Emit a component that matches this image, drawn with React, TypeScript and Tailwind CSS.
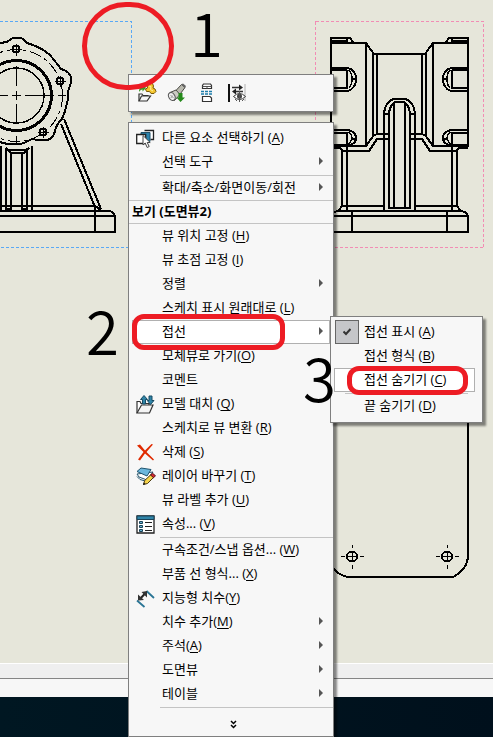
import type { ReactNode } from "react";
import { clsx } from "clsx";

type Item = {
  label: string;
  hotkey?: string;
  icon?: ReactNode;
  submenu?: boolean;
  active?: boolean;
};

const SelectOtherIcon = () => (
  <svg width="19" height="19" viewBox="0 0 19 19" fill="none">
    <path d="M8.500 1.500h9v9h-3" fill="#fff" stroke="#222" strokeWidth="1.300" />
    <path d="M5 3.500h9v9H5z" fill="#2b84ad" stroke="#1d4f68" />
    <path d="M.7 5.500h9v9h-9z" fill="#fff" stroke="#222" strokeWidth="1.300" />
    <path d="M7 6.500v9.500l2.200-2 2 4.500 2-1-2-4h3z" fill="#fff" stroke="#444" />
  </svg>
);

const ReplaceModelIcon = () => (
  <svg width="19" height="19" viewBox="0 0 19 19" fill="none">
    <path d="M1 18V6.500h3l1 2h8V11" fill="#fff" stroke="#333" strokeWidth="1.200" />
    <path d="M1 18l4.500-8h11.500l-3.500 8z" fill="#f4f4f4" stroke="#333" strokeWidth="1.200" />
    <path d="M8 .500l3.500 4H9.500V9h-3V4.500h-2z" fill="#2f84a8" stroke="#174b63" />
    <path d="M14.500 9.500l-3.200-4h1.700V1h3v4.500h2z" fill="#2f84a8" stroke="#174b63" />
  </svg>
);

const DeleteIcon = () => (
  <svg width="19" height="19" viewBox="0 0 19 19" fill="#e02a00">
    <path d="M1 2.500L4 1.500l5 6L15.500 1l1.500.500-6.500 7.500L18 16.500l-1 1-8-7L4 17.500l-2-1 5.500-7.500z" />
  </svg>
);

const LayerIcon = () => (
  <svg width="20" height="19" viewBox="0 0 20 19" fill="none" className="shrink-0">
    <path d="M1 7l2 3 8 3 6-8z" fill="#fff" stroke="#27566d" />
    <path d="M1 9.500l3 3 7 2 5-6" stroke="#27566d" />
    <path d="M1 4.500L5 1l10 1.500L11 9z" fill="#6bb7dd" stroke="#20546e" />
    <path d="M7.500 17.500l1.200-4L15 7.500l3 2.500-6.500 6.500z" fill="#f6d44a" stroke="#4b3a12" />
    <path d="M14.500 8l2-1.800 3 2.600-2 1.900z" fill="#d8262c" stroke="#54151a" />
    <path d="M7 18l.8-2.500 1.700 1.500z" fill="#111" />
  </svg>
);

const PropertiesIcon = () => (
  <svg width="19" height="19" viewBox="0 0 19 19" fill="none">
    <path d="M1 1h17v17H1z" fill="#fff" stroke="#222" strokeWidth="1.300" />
    <path d="M1 1h17v3.500H1z" fill="#2f84a8" stroke="#1a4358" />
    <path d="M3.500 6.500h3v2h-3zM3.500 10.500h3v2h-3zM3.500 14.500h3v2h-3z" fill="#69b2d2" stroke="#1a4358" />
    <path d="M9 7.500h7M9 11.500h7M9 15.500h7" stroke="#222" />
  </svg>
);

const SmartDimensionIcon = () => (
  <svg width="19" height="19" viewBox="0 0 19 19" fill="none">
    <path d="M1 11.500L8.500 18M10.500 2L18 9" stroke="#2a7595" strokeWidth="1.800" />
    <path d="M3.500 10.500L10 3.500" stroke="#222" strokeWidth="2" />
    <path d="M2 11.500V5.500l6 5.500zM11 2v6.500L5.500 3z" fill="#333" />
  </svg>
);

const OpenPartIcon = () => (
  <svg width="20" height="20" viewBox="0 0 20 20" fill="none">
    <path d="M10 2l2-1.500h3.500l1 2.500-.5 2 2 1 1 2.500-2 2h-3l-1.500-2h-3L8.500 6l2-1z" fill="#f4c52c" stroke="#795a08" />
    <path d="M12 3l2 .500-.500 3 2.500 1.500" stroke="#fff1a0" />
    <path d="M2 9c0-4 1.500-5.500 3.500-5.500V1l3.500 4-3.500 3.500V6.500C4 6.500 3 7.500 2 9z" fill="#3d9b24" />
    <path d="M2 18v-7h3l1 1.500h5V14" fill="#fff" stroke="#333" strokeWidth="1.200" />
    <path d="M2 18l2.500-5h9l-3.500 5z" fill="#f6f6f6" stroke="#333" strokeWidth="1.200" />
  </svg>
);

const FlashlightIcon = () => (
  <svg width="20" height="20" viewBox="0 0 20 20" fill="none">
    <path d="M8.500 8L14.500 1.500l3.500 3-6 8z" fill="#b9b9ae" stroke="#494943" />
    <path d="M14 1.500l2-1 3 2.500-1 2z" fill="#666" />
    <path d="M3 9.500l6-2.500 4 4.500-5.500 6z" fill="#cbcbc3" stroke="#4b4b46" />
    <ellipse cx="4.800" cy="13.500" rx="3" ry="4.200" transform="rotate(-28 4.800 13.500)" fill="#eee" stroke="#555" />
    <path d="M3.500 12l3 3M3.800 15l2-2.500" stroke="#999" />
    <path d="M11.500 10h4v4.500H18L13.500 19 9.500 14.500h2z" fill="#25891b" />
  </svg>
);

const BreakViewIcon = () => (
  <svg width="12" height="20" viewBox="0 0 12 20" fill="none">
    <path d="M1.500 5.500V2.500l1-1.500h7l1 1.500v3z" fill="#fff" stroke="#333" strokeWidth="1.200" />
    <path d="M1.500 3.500h9M6 3.500v2" stroke="#555" />
    <path d="M0 8.500h12M0 11h12" stroke="#1d7daa" strokeWidth="1.500" strokeDasharray="3 1" />
    <path d="M1.500 18.500v-5h7.500l1.500 1.500v3.500z" fill="#fff" stroke="#333" strokeWidth="1.200" />
  </svg>
);

const FlipDimensionIcon = () => (
  <svg width="20" height="20" viewBox="0 0 20 20" fill="none">
    <path d="M2 1v18" stroke="#111" strokeWidth="2" />
    <path d="M18 1v17" stroke="#c9c9c9" strokeWidth="1.500" />
    <path d="M5 4.500h9M8 8.500h8" stroke="#333" strokeWidth="1.500" />
    <path d="M12 1.500l4 3-4 3zM9 5.500l-4 3 4 3z" fill="#222" />
    <path d="M6.500 13.500q6-6 12 0-6 6-12 0z" fill="#fff" stroke="#333" />
    <circle cx="12.500" cy="13.300" r="2.500" fill="#444" />
    <path d="M12.500 8v11M8 16l2 2M17 16l-2 2" stroke="#555" />
  </svg>
);

const viewCommands: Item[] = [
  { label: "뷰 위치 고정 ", hotkey: "H" },
  { label: "뷰 초점 고정 ", hotkey: "I" },
  { label: "정렬", submenu: true },
  { label: "스케치 표시 원래대로 ", hotkey: "L" },
  { label: "접선", submenu: true, active: true },
  { label: "모체뷰로 가기", hotkey: "O" },
  { label: "코멘트" },
  { label: "모델 대치 ", hotkey: "Q", icon: <ReplaceModelIcon /> },
  { label: "스케치로 뷰 변환 ", hotkey: "R" },
  { label: "삭제 ", hotkey: "S", icon: <DeleteIcon /> },
  { label: "레이어 바꾸기 ", hotkey: "T", icon: <LayerIcon /> },
  { label: "뷰 라벨 추가 ", hotkey: "U" },
  { label: "속성... ", hotkey: "V", icon: <PropertiesIcon /> },
];

const moreCommands: Item[] = [
  { label: "구속조건/스냅 옵션... ", hotkey: "W" },
  { label: "부품 선 형식... ", hotkey: "X" },
  { label: "지능형 치수", hotkey: "Y", icon: <SmartDimensionIcon /> },
  { label: "치수 추가", hotkey: "M", submenu: true },
  { label: "주석", hotkey: "A", submenu: true },
  { label: "도면뷰", submenu: true },
  { label: "테이블", submenu: true },
];

const tools = [
  { name: "파트 열기", icon: <OpenPartIcon /> },
  { name: "확대 선택", icon: <FlashlightIcon /> },
  { name: "파단도", icon: <BreakViewIcon /> },
  { name: "치수 숨기기", icon: <FlipDimensionIcon /> },
];

const Label = ({ label, hotkey }: { label: string; hotkey?: string }) => (
  <span className="whitespace-pre">
    {label}
    {hotkey && (
      <>
        (<u className="underline-offset-2">{hotkey}</u>)
      </>
    )}
  </span>
);

const MenuItem = ({ item }: { item: Item }) => (
  <button
    type="button"
    role="menuitem"
    className={clsx(
      "mx-[3px] flex h-6 items-center border text-left",
      item.active ? "border-[#b0b0b0] bg-white" : "border-transparent"
    )}
  >
    <span className="flex w-[29px] shrink-0 pl-[3px]">{item.icon}</span>
    <span className="flex-1 pb-0.5">
      <Label label={item.label} hotkey={item.hotkey} />
    </span>
    {item.submenu && (
      <svg width="4" height="8" viewBox="0 0 4 8" className="mr-1.5 mb-0.5">
        <path d="M0 0l4 4-4 4z" fill="#555" />
      </svg>
    )}
  </button>
);

const Separator = () => <hr className="mt-px ml-[31px] border-[#c4c4c4]" />;

const ContextMenu = () => (
  <div
    role="menu"
    className="absolute top-[122px] left-32 flex w-[206px] flex-col border border-[#7f7f7f] bg-[#f7f7f7] pt-[3px] shadow-[3px_3px_2px_rgba(0,0,0,0.45)]"
  >
    <MenuItem item={{ label: "다른 요소 선택하기 ", hotkey: "A", icon: <SelectOtherIcon /> }} />
    <MenuItem item={{ label: "선택 도구", submenu: true }} />
    <Separator />
    <MenuItem item={{ label: "확대/축소/화면이동/회전", submenu: true }} />
    <h2 className="h-6 border-y border-[#c4c4c4] pl-[3px] text-[13px] leading-5 font-bold">보기 (도면뷰2)</h2>
    {viewCommands.map((item) => (
      <MenuItem key={item.label} item={item} />
    ))}
    <Separator />
    {moreCommands.map((item) => (
      <MenuItem key={item.label} item={item} />
    ))}
    <Separator />
    <button type="button" aria-label="더 보기" className="flex h-7 items-center justify-center pt-1 pl-1">
      <svg width="7" height="9" viewBox="0 0 7 9" fill="none" stroke="#000" strokeWidth="1.500">
        <path d="M1 1l2.500 2.500L6 1M1 5l2.500 2.500L6 5" />
      </svg>
    </button>
  </div>
);

const TangentSubmenu = () => (
  <div
    role="menu"
    className="absolute top-[316px] left-[330px] flex w-[153px] flex-col border border-[#7f7f7f] bg-[#f7f7f7] pt-[3px] pr-[7px] pb-1 pl-[3px] shadow-[3px_3px_2px_rgba(0,0,0,0.45)]"
  >
    <button type="button" role="menuitemcheckbox" aria-checked="true" className="flex h-6 items-center text-left">
      <span className="mr-[5px] ml-px flex size-6 items-center justify-center border border-[#666] bg-[#c5c6c9]">
        <svg width="8" height="8" viewBox="0 0 8 8" fill="none" stroke="#333" strokeWidth="2">
          <path d="M.5 3.500L3 6l4.500-5" />
        </svg>
      </span>
      <span className="pb-0.5">
        <Label label="접선 표시 " hotkey="A" />
      </span>
    </button>
    <button type="button" role="menuitem" className="flex h-6 items-center pb-0.5 pl-[30px] text-left">
      <Label label="접선 형식 " hotkey="B" />
    </button>
    <button type="button" role="menuitem" className="flex h-6 items-center border border-[#b0b0b0] bg-white pb-0.5 pl-[29px] text-left">
      <Label label="접선 숨기기 " hotkey="C" />
    </button>
    <hr className="mt-px mr-[7px] ml-[11px] border-[#c4c4c4]" />
    <button type="button" role="menuitem" className="flex h-6 items-center pb-0.5 pl-[30px] text-left">
      <Label label="끝 숨기기 " hotkey="D" />
    </button>
  </div>
);

const FrontView = () => (
  <g>
    <path d="M0 21.500H131.500V247.500H0" stroke="#5aa9f5" strokeWidth="1" strokeDasharray="3 2" />
    <circle cx="16.500" cy="95.500" r="27.500" strokeWidth="1.500" />
    <circle cx="16.500" cy="95.500" r="35" strokeWidth="3" />
    <circle cx="16.500" cy="95.500" r="46" strokeWidth="1" strokeDasharray="12 4 3 4" />
    <path d="M0 43l7-1 4-3q6-3 12 0l4 4q14 4 23 12l8 10 3 4q8 2 10 8 1 5-1 9l-2 5v8l-3 12-3 8q-6 6-7 12-2 8-8 9l-9 0-6-1-8 4q-10 3-21 0l-3-1" />
    <path d="M0 95.500h8M12 95.500h9M25 95.500h29M58 95.500h8M16.500 44v12M16.500 66v20M16.500 91v9M16.500 104v20M16.500 136v9" strokeWidth="1" />
    {[
      [16, 49],
      [60, 81],
      [43, 132],
    ].map(([x, y]) => (
      <g key={x}>
        <circle cx={x} cy={y} r="3.500" />
        <path d={`M${x - 5} ${y + 0.5}h11M${x + 0.5} ${y - 5}v11`} strokeWidth="1" />
      </g>
    ))}
    <path d="M61 124l34 83M64 119l37 90" />
    <path d="M1 146v64M6 148v61M11 153v57M22 153v57M27 148v61M32 146v64M6 148l5 5h13l5-5M8 150h18M5 209h6M22 209h6" />
    <path d="M0 206h95l6 4M0 211h109q5 1 6 5v16H0M0 216h115M95 206v26" />
  </g>
);

const SideHalf = () => (
  <g>
    <path d="M331 147V38h19l3 4M347 38v4M331 41h16M331 43h35l8 11h26M366 43v103M373 54v83M377 55v79" />
    <path d="M331 68h17q8 2 8 11t-8 12h-17M331 70h16M347 70v18h-16" />
    <path d="M349 70q3 3 3 9t-3 9M351 79h5" strokeWidth="1.500" />
    <path d="M331 130h17q8 2 8 8 0 6-7 7h-18M331 133h16v12" />
    <path d="M349 132q3 3 3 7l-3 5M351 139h5" strokeWidth="1.500" />
    <path d="M331 148h8M331 146h35l8-11 4-1h10M339 147l4 4h26l8-12h11M342 151v55M347 145v65" />
    <path d="M384 210v-97q1-10 9-14h7M389 209v-96q1-8 6-11h5M394 102v107M384 114h5M384 206h-42l-3 4M389 208h11" />
    <path d="M400 211h-62q-6 1-7 5v16h69M331 216h69M352 211v21" />
  </g>
);

const Drawing = () => (
  <svg width="493" height="663" viewBox="0 0 493 663" fill="none" stroke="#000" strokeWidth="2" shapeRendering="crispEdges" className="shrink-0">
    <FrontView />
    <path d="M315.500 21.500H483.500V247.500H315.500z" stroke="#f28cb4" strokeWidth="1" strokeDasharray="3 2" />
    <SideHalf />
    <g transform="matrix(-1 0 0 1 799 0)">
      <SideHalf />
    </g>
    <path d="M468 423v132q0 14-15 22H348q-10-2-16-10" />
    {[352, 447].map((x) => (
      <g key={x}>
        <circle cx={x} cy="556.500" r="5" />
        <path d={`M${x - 11} 556.500h4M${x - 5} 556.500h10M${x + 8} 556.500h4M${x + 0.5} 545v3M${x + 0.5} 551v11M${x + 0.5} 565v4`} strokeWidth="1" />
      </g>
    ))}
  </svg>
);

export default function App() {
  return (
    <main className="relative flex min-h-screen flex-col overflow-hidden bg-[#e6e6da] font-['Open_Sans','Noto_Sans_CJK_KR',sans-serif] text-[13px] leading-5 text-black">
      <section aria-label="도면" className="flex flex-1 overflow-hidden">
        <Drawing />
      </section>
      <footer>
        <div className="h-4 border-t border-b border-t-white border-b-[#858585] bg-[#efefef]" />
        <div className="h-[18px] bg-[#f7f7f7]" />
        <div className="h-10 bg-linear-to-r from-[#001722] to-[#00101c]" />
      </footer>

      {/* Shortcut toolbar */}
      <div
        role="toolbar"
        className="absolute top-[74px] left-32 flex h-[38px] w-[206px] items-center gap-2.5 border border-[#7f7f7f] bg-[#f7f7f7] pl-2 shadow-[3px_3px_2px_rgba(0,0,0,0.45)]"
      >
        {tools.map((tool) => (
          <button key={tool.name} type="button" aria-label={tool.name} className="flex w-5 justify-center">
            {tool.icon}
          </button>
        ))}
      </div>

      <ContextMenu />
      <TangentSubmenu />

      {/* Step annotations */}
      <div className="pointer-events-none font-['Noto_Sans_CJK_KR',sans-serif] text-[60px] leading-[62px] font-[350]">
        <div className="absolute top-0.5 left-[82px] h-[88px] w-[92px] rounded-full border-5 border-[#ed1c24]" />
        <div className="absolute top-[314px] left-[132px] h-9 w-[153px] rounded-xl border-5 border-[#ed1c24]" />
        <div className="absolute top-[366px] left-[347px] h-[29px] w-[121px] rounded-xl border-5 border-[#ed1c24]" />
        <span className="absolute top-0 left-[190px]">1</span>
        <span className="absolute top-[298px] left-[86px]">2</span>
        <span className="absolute top-[345px] left-[303px]">3</span>
      </div>
    </main>
  );
}
